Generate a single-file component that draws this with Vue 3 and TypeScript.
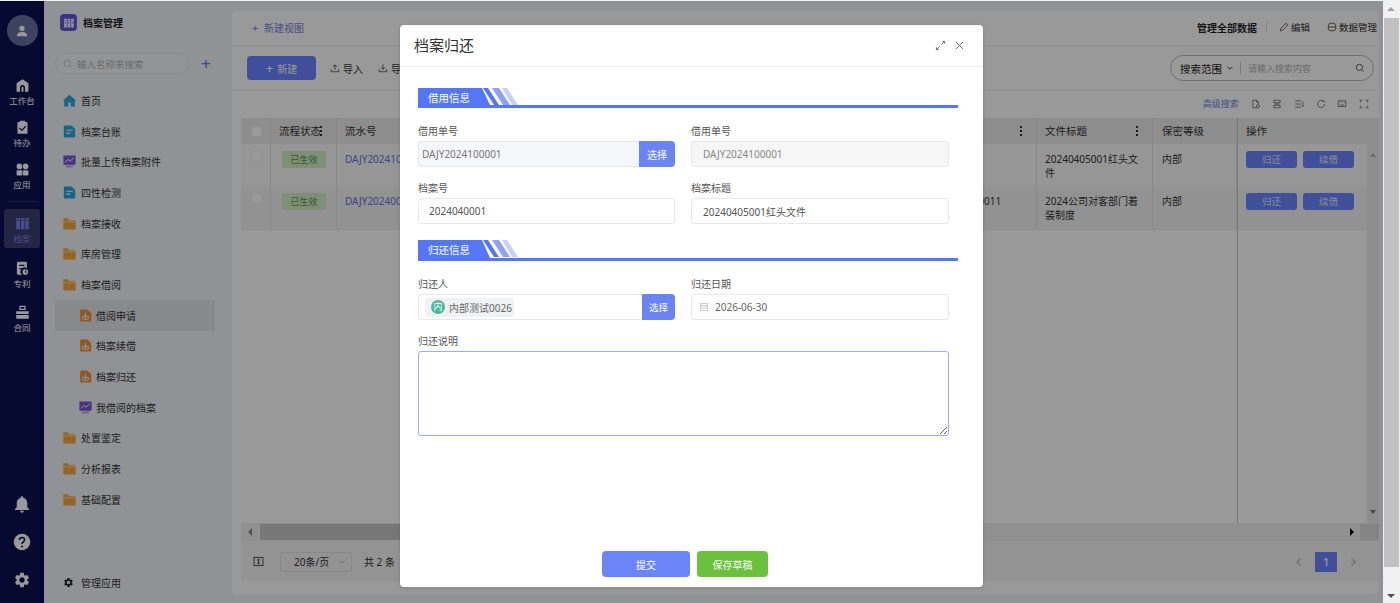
<template>
  <div class="screen">
    <div class="page">
      <aside class="rail">
        <div class="avatar">
          <svg viewBox="0 0 24 24" class="avatar-icon"><circle cx="12" cy="7.5" r="4.5" /><path d="M3 20c0-4 4-6.5 9-6.5s9 2.5 9 6.5v1H3z" /></svg>
        </div>
        <template v-for="item in railItems" :key="item.label">
          <div v-if="item.divider" class="rail-divider"></div>
          <div class="rail-item" :class="{ active: item.active }">
            <svg viewBox="0 0 24 24" class="rail-icon">
              <path :d="item.icon" fill-rule="evenodd" />
            </svg>
            <span>{{ item.label }}</span>
          </div>
        </template>
        <div class="rail-bottom">
          <svg viewBox="0 0 24 24" class="rail-tool bell"><path d="M12 1.5c1 0 1.7.7 1.7 1.6v.7c3.4.8 5.3 3.6 5.3 7.2v5l2.5 3v1h-19v-1l2.5-3v-5c0-3.6 1.9-6.4 5.3-7.2v-.7c0-.9.7-1.6 1.7-1.6zM9.5 21h5a2.5 2.5 0 0 1-5 0z" /></svg>
          <svg viewBox="0 0 24 24" class="rail-tool help"><circle cx="12" cy="12" r="11" /><path class="help-mark" d="M8.6 9.2c0-2 1.5-3.3 3.5-3.3s3.4 1.2 3.4 3c0 2.800-3.500 2.900-3.500 5.800" /><circle class="help-dot" cx="12" cy="18" r="1.300" /></svg>
          <svg viewBox="0 0 24 24" class="rail-tool gear"><path :d="gearPath" /></svg>
        </div>
      </aside>

      <aside class="sidebar">
        <div class="brand">
          <span class="brand-logo">
            <svg viewBox="0 0 16 16"><path fill-rule="evenodd" d="M2.500 3h3v10h-3zM3.300 5v1h1.400V5zM3.300 7.500v1h1.400v-1zM6.500 3h3v10h-3zM7.300 5v1h1.400V5zM7.300 7.500v1h1.400v-1zM10.500 3h3l-.4 10h-2.600zM11.300 5v1h1.300V5zM11.300 7.500v1h1.300v-1z" /></svg>
          </span>
          <strong>档案管理</strong>
        </div>
        <div class="side-search">
          <div class="side-input">
            <svg viewBox="0 0 16 16" class="stroke-icon"><circle cx="7" cy="7" r="5" /><path d="m11 11 3 3" /></svg>
            <span>输入名称来搜索</span>
          </div>
          <span class="side-add">+</span>
        </div>
        <nav class="menu">
          <div
            v-for="item in menuItems"
            :key="item.label"
            class="menu-row"
            :class="{ sub: item.sub, current: item.current }"
          >
            <svg viewBox="0 0 16 16" class="menu-icon">
              <template v-if="item.kind === 'home'">
                <path d="M8 1 .3 7.600 1.500 8.800V15.500h13V8.800l1.200-1.200z" fill="#27a7de" />
                <rect x="6.500" y="10.500" width="3" height="5" fill="#fff" />
              </template>
              <template v-else-if="item.kind === 'doc'">
                <path d="M2.500.5h8L15 5v9a1.500 1.500 0 0 1-1.500 1.500h-11A1.500 1.500 0 0 1 1 14V2A1.500 1.500 0 0 1 2.500.5z" fill="#27a7de" />
                <path d="M4 6.500h8M4 10h5" stroke="#fff" stroke-width="1.400" />
              </template>
              <template v-else-if="item.kind === 'chart'">
                <rect x="0.500" y="0.500" width="15" height="11.500" rx="1" fill="#7a58d8" />
                <path d="m2.500 9 3.500-3.500 2.500 2L13.500 3.500" stroke="#fff" stroke-width="1.200" fill="none" />
                <path d="M2.500 13h11L11.500 15.500h-7z" fill="#b7a3ec" />
              </template>
              <template v-else-if="item.kind === 'folder'">
                <path d="M0.500 1.500h5.500l1.500 2.500H15.500V15.500H.5z" fill="#f3aa3a" />
                <path d="M0.500 5h15v1.500H.5z" fill="#fbd287" />
              </template>
              <template v-else>
                <path d="M3 .5h7l5 4.500v9A1.500 1.500 0 0 1 13.500 15.500h-10.500A1.500 1.500 0 0 1 1.500 14V2A1.500 1.500 0 0 1 3 .5z" fill="#f2913a" />
                <path d="M8 4.500v3M4.500 12.500V9h7v3.500M8 7.500v5M4.500 12.500h7" stroke="#fff" stroke-width="1.100" fill="none" />
              </template>
            </svg>
            <span>{{ item.label }}</span>
          </div>
        </nav>
        <div class="manage">
          <svg viewBox="0 0 24 24" class="manage-icon"><path :d="gearPath" /></svg>
          <span>管理应用</span>
        </div>
      </aside>

      <main class="main">
        <header class="tabbar">
          <span class="new-view"><b>+</b> 新建视图</span>
          <div class="tab-actions">
            <strong>管理全部数据</strong>
            <i class="tab-sep"></i>
            <span class="tab-action">
              <svg viewBox="0 0 16 16" class="stroke-icon"><path d="M2 14l1-4 8-8 3 3-8 8z" /></svg>
              编辑
            </span>
            <span class="tab-action data">
              <svg viewBox="0 0 16 16" class="stroke-icon"><rect x="2" y="2" width="12" height="12" rx="4" /><path d="M2 8h12" /></svg>
              数据管理
            </span>
          </div>
        </header>

        <section class="toolbar">
          <button class="btn-new"><b>+</b>新建</button>
          <span class="tool-link">
            <svg viewBox="0 0 16 16" class="stroke-icon"><path d="M8 11V3M5 6l3-3 3 3M2 10v4h12v-4" /></svg>
            导入
          </span>
          <span class="tool-link">
            <svg viewBox="0 0 16 16" class="stroke-icon"><path d="M8 2v8M5 7l3 3 3-3M2 10v4h12v-4" /></svg>
            导出
          </span>
          <div class="search-pill">
            <span class="scope">搜索范围</span>
            <svg viewBox="0 0 10 10" class="stroke-icon scope-arrow"><path d="m2 3.500 3 3 3-3" /></svg>
            <i class="scope-sep"></i>
            <span class="search-hint">请输入搜索内容</span>
            <svg viewBox="0 0 16 16" class="stroke-icon search-go"><circle cx="7" cy="7" r="5" /><path d="m11 11 3 3" /></svg>
          </div>
        </section>

        <section class="table-tools">
          <span class="advanced">高级搜索</span>
          <svg v-for="icon in tableIcons" :key="icon" viewBox="0 0 16 16" class="stroke-icon table-tool"><path :d="icon" /></svg>
        </section>

        <section class="table">
          <div class="thead grid">
            <div class="cell check-cell"><i class="checkbox"></i></div>
            <div class="cell">流程状态<b class="kebab"></b></div>
            <div class="cell">流水号</div>
            <div class="cell"></div>
            <div class="cell"><b class="kebab"></b></div>
            <div class="cell">文件标题<b class="kebab"></b></div>
            <div class="cell level-cell">保密等级</div>
            <div class="cell action-cell">操作</div>
          </div>
          <div class="tbody">
            <div class="rows">
              <div v-for="row in rows" :key="row.serial" class="row grid" :class="row.cls">
                <div class="cell check-cell"><i class="checkbox"></i></div>
                <div class="cell status-cell"><span class="status">已生效</span></div>
                <div class="cell link">{{ row.serial }}</div>
                <div class="cell"></div>
                <div class="cell">{{ row.code }}</div>
                <div class="cell">{{ row.title }}</div>
                <div class="cell level-cell">内部</div>
                <div class="cell action-cell">
                  <button class="row-btn">归还</button>
                  <button class="row-btn">续借</button>
                </div>
              </div>
              <div class="filler grid"><div class="filler-action"></div></div>
            </div>
            <div class="v-scroll">
              <i class="arrow up"></i>
              <i class="arrow down"></i>
            </div>
          </div>
          <div class="h-scroll">
            <i class="h-arrow left"></i>
            <div class="h-thumb"></div>
            <i class="h-arrow right"></i>
            <div class="h-corner"></div>
          </div>
        </section>

        <footer class="pager">
          <svg viewBox="0 0 16 16" class="stroke-icon pager-icon"><rect x="1.500" y="2" width="13" height="12" /><path d="M8 4.500v7M6 6l2-1.500L10 6M6 10l2 1.500 2-1.500" /></svg>
          <div class="page-size">
            <span>20条/页</span>
            <svg viewBox="0 0 10 10" class="stroke-icon"><path d="m1.500 3.500 3.500 3 3.500-3" /></svg>
          </div>
          <span class="total">共 2 条</span>
          <div class="pages">
            <svg viewBox="0 0 10 10" class="stroke-icon page-arrow"><path d="M6.500 1.500 3 5l3.500 3.500" /></svg>
            <span class="page-no">1</span>
            <svg viewBox="0 0 10 10" class="stroke-icon page-arrow"><path d="M3.500 1.500 7 5 3.500 8.500" /></svg>
          </div>
        </footer>
      </main>

      <div class="mask"></div>

      <div class="dialog">
        <div class="dialog-head">
          <h3>档案归还</h3>
          <svg viewBox="0 0 12 12" class="head-icon"><path d="M7 5l3.500-3.500M8 1.500h2.500V4M5 7l-3.500 3.500M1.500 8v2.500H4" /></svg>
          <svg viewBox="0 0 12 12" class="head-icon close"><path d="m2 2 8 8M10 2l-8 8" /></svg>
        </div>

        <div class="dialog-body">
          <div class="section">
            <span class="section-tag">借用信息</span>
            <svg viewBox="0 0 40 17" class="section-stripes">
              <path d="M0 0h5l11 17h-5z" fill="#5577f7" />
              <path d="M9 0h7l11 17h-7z" fill="#8ea3f8" />
              <path d="M19 0h5l11 17h-6z" fill="#c5d1fb" />
            </svg>
          </div>
          <div class="form-grid">
            <label class="field">
              <span>借用单号</span>
              <div class="input-group">
                <input class="input tight" value="DAJY2024100001" readonly />
                <button class="pick">选择</button>
              </div>
            </label>
            <label class="field">
              <span>借用单号</span>
              <input class="input disabled" value="DAJY2024100001" readonly />
            </label>
            <label class="field">
              <span>档案号</span>
              <input class="input first-col" value="2024040001" readonly />
            </label>
            <label class="field">
              <span>档案标题</span>
              <input class="input" value="20240405001红头文件" readonly />
            </label>
          </div>

          <div class="section second">
            <span class="section-tag">归还信息</span>
            <svg viewBox="0 0 40 17" class="section-stripes">
              <path d="M0 0h5l11 17h-5z" fill="#5577f7" />
              <path d="M9 0h7l11 17h-7z" fill="#8ea3f8" />
              <path d="M19 0h5l11 17h-6z" fill="#c5d1fb" />
            </svg>
          </div>
          <div class="form-grid">
            <div class="field">
              <span>归还人</span>
              <div class="input-group person">
                <div class="chip-box">
                  <span class="chip"><i>内</i>内部测试0026</span>
                </div>
                <button class="pick narrow">选择</button>
              </div>
            </div>
            <div class="field">
              <span>归还日期</span>
              <div class="date-box">
                <svg viewBox="0 0 12 12" class="calendar"><rect x="1.500" y="2" width="9" height="8.500" /><path d="M1.500 4.500h9M4 3.500v3M8 3.500v3M1.500 7.500h9" /></svg>
                <span>2026-06-30</span>
              </div>
            </div>
            <label class="field wide">
              <span>归还说明</span>
              <textarea class="note"></textarea>
            </label>
          </div>
        </div>

        <div class="dialog-foot">
          <button class="submit">提交</button>
          <button class="draft">保存草稿</button>
        </div>
      </div>
    </div>

    <div class="page-scroll">
      <i class="sb-arrow sb-up"></i>
      <div class="sb-thumb"></div>
      <i class="sb-arrow sb-down"></i>
    </div>
  </div>
</template>

<script setup lang="ts">
interface RailItem {
  label: string
  icon: string
  active?: boolean
  divider?: boolean
}

interface MenuItem {
  label: string
  kind: 'home' | 'doc' | 'chart' | 'folder' | 'odoc'
  sub?: boolean
  current?: boolean
}

const gearPath =
  'M19.14 12.94c.04-.3.06-.61.06-.94 0-.32-.02-.64-.07-.94l2.03-1.58a.49.49 0 0 0 .12-.61l-1.92-3.32a.488.488 0 0 0-.59-.22l-2.39.96c-.5-.38-1.03-.7-1.62-.94l-.36-2.54a.484.484 0 0 0-.48-.41h-3.84c-.24 0-.43.17-.47.41l-.36 2.54c-.59.24-1.13.57-1.62.94l-2.39-.96c-.22-.08-.47 0-.59.22L2.74 8.870c-.12.21-.08.47.12.61l2.03 1.58c-.05.3-.09.63-.09.94s.02.64.07.94l-2.03 1.58a.49.49 0 0 0-.12.61l1.92 3.32c.12.22.37.29.59.22l2.39-.96c.5.38 1.03.7 1.62.94l.36 2.54c.05.24.24.41.48.41h3.84c.24 0 .44-.17.47-.41l.36-2.54c.59-.24 1.13-.56 1.62-.94l2.39.96c.22.08.47 0 .59-.22l1.920-3.32c.12-.22.07-.47-.12-.61l-2.010-1.58zM12 15.600c-1.980 0-3.600-1.620-3.600-3.600s1.620-3.600 3.600-3.600 3.600 1.620 3.600 3.600-1.620 3.600-3.600 3.600z'

const railItems: RailItem[] = [
  { label: '工作台', icon: 'M12 2 2.500 8.500V22H8v-7a4 4 0 0 1 8 0v7h5.500V8.500zM10.500 22v-6.500a1.500 1.500 0 0 1 3 0V22z' },
  { label: '待办', icon: 'M8 1h8v2h3a1 1 0 0 1 1 1v17a1 1 0 0 1-1 1H5a1 1 0 0 1-1-1V4a1 1 0 0 1 1-1h3zM16.500 9 11 15l-3-3-1.400 1.400L11 17.800l7-7.400z' },
  { label: '应用', icon: 'M7 2.500a4.500 4.500 0 1 1 0 9 4.500 4.500 0 0 1 0-9zM17 2.500a4.500 4.500 0 1 1 0 9 4.500 4.500 0 0 1 0-9zM4 13h6a1.500 1.500 0 0 1 1.500 1.500V20a1.500 1.500 0 0 1-1.500 1.500H4A1.500 1.500 0 0 1 2.500 20v-5.500A1.500 1.500 0 0 1 4 13zM14 13h6a1.500 1.500 0 0 1 1.500 1.500V20a1.500 1.500 0 0 1-1.500 1.500h-6a1.500 1.500 0 0 1-1.500-1.500v-5.500A1.500 1.500 0 0 1 14 13z' },
  { label: '档案', active: true, divider: true, icon: 'M2 3h6v18H2zM3.500 6v2h3V6zM9.500 3H15v18H9.500zM11 6v2h2.500V6zM16.500 3H22v18h-5.500zM18 6v2h2.500V6z' },
  { label: '专利', icon: 'M5 1h12a2 2 0 0 1 2 2v8.500a6 6 0 0 0-7.500 10.500H5a2 2 0 0 1-2-2V3a2 2 0 0 1 2-2zM7 6v2h8V6zM7 11v2h4v-2zM16.500 13a4.500 4.500 0 1 1 0 9 4.500 4.500 0 0 1 0-9zM16 15v3.500h3V17h-1.500v-2z' },
  { label: '合同', icon: 'M7 1h10v7H7zM9 3v3h6V3zM2 10h20v12H2zM2 14.500v1.500h20v-1.500z' }
]

const menuItems: MenuItem[] = [
  { label: '首页', kind: 'home' },
  { label: '档案台账', kind: 'doc' },
  { label: '批量上传档案附件', kind: 'chart' },
  { label: '四性检测', kind: 'doc' },
  { label: '档案接收', kind: 'folder' },
  { label: '库房管理', kind: 'folder' },
  { label: '档案借阅', kind: 'folder' },
  { label: '借阅申请', kind: 'odoc', sub: true, current: true },
  { label: '档案续借', kind: 'odoc', sub: true },
  { label: '档案归还', kind: 'odoc', sub: true },
  { label: '我借阅的档案', kind: 'chart', sub: true },
  { label: '处置鉴定', kind: 'folder' },
  { label: '分析报表', kind: 'folder' },
  { label: '基础配置', kind: 'folder' }
]

const tableIcons: string[] = [
  'M10 14H3V2h6l3 3v3M9 2v3h3M11 9a2.500 2.500 0 1 1 0 5 2.500 2.500 0 0 1 0-5z',
  'M3 2h10v4H3zM3 10h10v4H3zM6 6v4M10 6v4',
  'M2 3h9M2 8h9M2 13h9M14 4v8M12.800 10.500 14 12l1.200-1.500',
  'M13.500 8A5.500 5.500 0 1 1 11.500 3.800M11.500 1.500v2.500H14',
  'M2 3h12v9H2zM4 5.500h.5M6.500 5.500h.5M9 5.500h.5M11.500 5.500h.5M5 9.500h6',
  'M2 5.500V2h3.500M10.500 2H14v3.500M2 10.500V14h3.500M14 10.500V14h-3.500'
]

const rows = [
  { serial: 'DAJY2024100001', code: '', title: '20240405001红头文件', cls: 'row-a' },
  { serial: 'DAJY2024000011', code: '2024040011', title: '2024公司对客部门着装制度', cls: 'row-b' }
]
</script>

<style>
html,
body {
  margin: 0;
  overflow: hidden;
}
</style>

<style scoped>
* {
  box-sizing: border-box;
}

.screen {
  display: flex;
  width: 1400px;
  height: 603px;
  overflow: hidden;
  font-family: "Noto Sans", "Noto Sans CJK SC", sans-serif;
  font-size: 10px;
  color: #333;
  background: #f1f1f1;
}

.page {
  position: relative;
  display: flex;
  width: 1383px;
  height: 603px;
  padding-top: 1px;
  background: #f0f3f8;
}

.stroke-icon {
  fill: none;
  stroke: currentColor;
  stroke-width: 1.2;
  flex: none;
}

/* left rail */
.rail {
  display: flex;
  flex-direction: column;
  align-items: center;
  flex: none;
  width: 44px;
  background: #0a1150;
}

.avatar {
  display: flex;
  align-items: center;
  justify-content: center;
  flex: none;
  width: 31px;
  height: 31px;
  margin-top: 14px;
  margin-bottom: 31.500px;
  border-radius: 50%;
  background: #646f9e;
}

.avatar-icon {
  width: 14px;
  height: 14px;
  fill: #fff;
}

.rail-item {
  display: flex;
  flex-direction: column;
  align-items: center;
  flex: none;
  width: 36px;
  height: 42px;
  border-radius: 3px;
  font-size: 8.500px;
  line-height: 11px;
  color: #fff;
}

.rail-icon {
  flex: none;
  width: 15px;
  height: 15px;
  margin-bottom: 2px;
  fill: #fff;
}

.rail-item.active {
  height: 39px;
  margin-bottom: 12.500px;
  padding-top: 7px;
  background: #3a3f70;
  color: #7c80e8;
}

.rail-item.active ~ .rail-item {
  height: 44px;
}

.rail-item.active .rail-icon {
  fill: #7c80e8;
}

.rail-divider {
  flex: none;
  width: 30px;
  height: 1px;
  margin: -3px 0 7.500px;
  background: #2a3170;
}

.rail-bottom {
  display: flex;
  flex-direction: column;
  align-items: center;
  gap: 20px;
  margin-top: auto;
  padding-bottom: 14px;
}

.rail-tool {
  width: 18px;
  height: 18px;
  fill: #fff;
}

.help-mark {
  fill: none;
  stroke: #0a1150;
  stroke-width: 2;
}

.help-dot {
  fill: #0a1150;
}

/* menu column */
.sidebar {
  display: flex;
  flex-direction: column;
  flex: none;
  width: 187px;
  padding: 13px 15px 0 11px;
}

.brand {
  display: flex;
  align-items: center;
  gap: 6px;
  height: 17px;
  padding-left: 5px;
  font-size: 10px;
  color: #222;
}

.brand-logo {
  display: flex;
  align-items: center;
  justify-content: center;
  width: 17px;
  height: 17px;
  border-radius: 4px;
  background: #6a55e0;
}

.brand-logo svg {
  width: 14px;
  height: 14px;
  fill: #fff;
}

.side-search {
  display: flex;
  align-items: center;
  gap: 12px;
  margin-top: 22px;
}

.side-input {
  display: flex;
  align-items: center;
  gap: 4px;
  width: 134px;
  height: 21px;
  padding-left: 7px;
  border: 1px solid #e5e7ea;
  border-radius: 11px;
  background: #f6f7f9;
  color: #b3b3b3;
  font-size: 9.500px;
}

.side-input svg {
  width: 10px;
  height: 10px;
}

.side-add {
  font-size: 17px;
  line-height: 20px;
  color: #6176ea;
}

.menu {
  margin-top: 11px;
}

.menu-row {
  display: flex;
  align-items: center;
  gap: 5px;
  width: 160px;
  height: 30.700px;
  padding-left: 8px;
  color: #333;
}

.menu-row.sub {
  padding-left: 24px;
  gap: 4px;
}

.menu-row.current {
  background: #e2e4e8;
}

.menu-icon {
  flex: none;
  width: 13px;
  height: 13px;
}

.manage {
  display: flex;
  align-items: center;
  gap: 7px;
  margin-top: auto;
  height: 20px;
  margin-bottom: 11px;
  padding-left: 8px;
  color: #333;
}

.manage-icon {
  width: 11px;
  height: 11px;
  fill: #222;
}

/* main card */
.main {
  display: flex;
  flex-direction: column;
  flex: 1;
  min-width: 0;
  margin: 9px 3px 8px 0;
  border: 1px solid #f2f3f5;
  border-radius: 5px;
  background: #fff;
}

.tabbar {
  display: flex;
  align-items: center;
  justify-content: space-between;
  flex: none;
  height: 35px;
  padding: 0 2px 2px 20px;
  border-bottom: 1px solid #f1f1f1;
}

.new-view {
  color: #7183e8;
}

.new-view b {
  margin-right: 3px;
  font-weight: 400;
  font-size: 11px;
}

.tab-actions {
  display: flex;
  align-items: center;
}

.tab-actions strong {
  font-weight: 600;
  color: #222;
}

.tab-sep {
  width: 1px;
  height: 10px;
  margin: 0 12px 0 9px;
  background: #ddd;
}

.tab-action {
  display: flex;
  align-items: center;
  gap: 2px;
  font-size: 9.500px;
}

.tab-action svg {
  width: 10px;
  height: 10px;
}

.tab-action.data {
  margin-left: 17px;
}

.toolbar {
  display: flex;
  align-items: center;
  flex: none;
  height: 45px;
  padding: 0 5px 0 15px;
  border-bottom: 1px solid #f1f1f1;
}

.btn-new {
  width: 69px;
  height: 24px;
  margin-right: 14px;
  border: 0;
  border-radius: 4px;
  background: #6a84ff;
  color: #fff;
  font: inherit;
}

.btn-new b {
  margin-right: 4px;
  font-weight: 400;
  font-size: 13px;
}

.tool-link {
  display: flex;
  align-items: center;
  gap: 3px;
  margin-right: 15px;
}

.tool-link svg {
  width: 10px;
  height: 10px;
}

.search-pill {
  display: flex;
  align-items: center;
  width: 204px;
  height: 26px;
  margin-left: auto;
  padding: 0 7px 0 9px;
  border: 1px solid #bbb;
  border-radius: 13px;
}

.scope {
  color: #222;
  font-size: 10.500px;
}

.scope-arrow {
  width: 8px;
  height: 8px;
  margin: 0 6px 0 4px;
}

.scope-sep {
  width: 1px;
  height: 12px;
  margin-right: 7px;
  background: #ccc;
}

.search-hint {
  color: #b3b3b3;
  font-size: 9px;
}

.search-go {
  width: 10px;
  height: 10px;
  margin-left: auto;
  margin-right: 1px;
}

.table-tools {
  display: flex;
  align-items: center;
  flex: none;
  justify-content: flex-end;
  gap: 11.700px;
  height: 27px;
  padding: 0 10px 2px 0;
  color: #555;
}

.advanced {
  color: #6f80e6;
  font-size: 9px;
}

.table-tool {
  width: 10px;
  height: 10px;
}

/* table */
.table {
  display: flex;
  flex-direction: column;
  flex: 1;
  min-height: 0;
  margin-left: 9px;
}

.grid {
  display: grid;
  grid-template-columns: 30px 66px 150px 449px 101px 116px 84px 131px;
}

.thead {
  flex: none;
  height: 26px;
  background: #ebebeb;
  padding-right: 12px;
  font-size: 10.500px;
}

.thead .cell {
  display: flex;
  align-items: center;
  position: relative;
  white-space: nowrap;
}

.cell {
  padding: 0 8px;
  line-height: 14px;
  border-right: 1px solid #e3e3e3;
  min-width: 0;
}

.check-cell {
  padding: 0 0 0 10px;
}

.checkbox {
  display: block;
  width: 11px;
  height: 11px;
  border: 1px solid #efefef;
  border-radius: 2px;
  background: #fff;
}

.kebab {
  position: absolute;
  right: 14px;
  top: 8px;
  width: 2px;
  height: 2px;
  background: #333;
  box-shadow: 0 4px 0 #333, 0 8px 0 #333;
}

.level-cell {
  padding-left: 9px;
}

.tbody {
  display: flex;
  flex: 1;
  min-height: 0;
}

.rows {
  display: flex;
  flex-direction: column;
  flex: 1;
  min-width: 0;
}

.row {
  flex: none;
}

.row .cell {
  padding-top: 8px;
  padding-bottom: 7px;
}

.row .check-cell {
  padding-top: 7px;
}

.row .status-cell {
  padding-top: 7px;
}

.row-a {
  height: 42px;
  background: #fafafa;
}

.row-b {
  height: 44px;
  background: #f3f3f3;
  border-bottom: 1px solid #ececec;
}

.link {
  color: #6c70dd;
  white-space: nowrap;
}

.status {
  display: block;
  width: 44px;
  height: 17px;
  margin-left: 3px;
  text-align: center;
  font-size: 9px;
  line-height: 17px;
  border-radius: 2px;
  background: #d2eec5;
  color: #5a9a40;
}

.action-cell {
  border-left: 1px solid #c4c4c4;
  border-right: 0;
}

.thead .action-cell {
  padding-left: 8px;
}

.row .action-cell {
  display: flex;
  gap: 6px;
  align-items: flex-start;
  padding-top: 7px;
  padding-left: 8px;
}

.row-btn {
  width: 51px;
  height: 17px;
  padding: 0;
  border: 0;
  border-radius: 3px;
  background: #6a84ff;
  color: #dfe4ff;
  font: inherit;
  font-size: 9.500px;
}

.filler {
  flex: 1;
}

.filler-action {
  grid-column: 8;
  border-left: 1px solid #c4c4c4;
}

.v-scroll {
  position: relative;
  flex: none;
  width: 12px;
  background: #ececec;
}

.arrow {
  position: absolute;
  left: 3px;
  width: 0;
  height: 0;
  border-left: 3px solid transparent;
  border-right: 3px solid transparent;
}

.arrow.up {
  top: 9px;
  border-bottom: 4px solid #b5b5b5;
}

.arrow.down {
  bottom: 9px;
  border-top: 4px solid #777;
}

.h-scroll {
  display: flex;
  align-items: center;
  flex: none;
  height: 17px;
  background: #f1f1f1;
}

.h-thumb {
  width: 200px;
  height: 16px;
  margin-left: 8px;
  background: #c6c6c6;
}

.h-arrow {
  width: 0;
  height: 0;
  border-top: 4px solid transparent;
  border-bottom: 4px solid transparent;
}

.h-arrow.left {
  margin-left: 7px;
  border-right: 4px solid #888;
}

.h-arrow.right {
  margin-left: auto;
  margin-right: 6px;
  border-left: 4px solid #000;
}

.h-corner {
  width: 19px;
  height: 16px;
  background: #dcdcdc;
}

.pager {
  display: flex;
  align-items: center;
  flex: none;
  height: 41px;
  margin-left: 9px;
  margin-bottom: 13px;
  padding: 1px 0 0 12px;
  background: #f5f5f5;
  border-top: 1px solid #f1f1f1;
}

.pager-icon {
  width: 11px;
  height: 11px;
  margin-right: 16px;
}

.page-size {
  display: flex;
  align-items: center;
  justify-content: space-between;
  width: 72px;
  height: 20px;
  padding: 0 5px 0 13px;
  border: 1px solid #e2e2e2;
  border-radius: 2px;
}

.page-size svg {
  width: 8px;
  height: 8px;
  color: #bbb;
}

.total {
  margin-left: 12px;
}

.pages {
  display: flex;
  align-items: center;
  gap: 11px;
  margin-left: auto;
  padding-right: 21px;
}

.page-arrow {
  width: 10px;
  height: 10px;
  color: #bbb;
}

.page-no {
  width: 22px;
  height: 20px;
  text-align: center;
  line-height: 20px;
  background: #6a84ff;
  color: #fff;
  font-weight: 600;
}

.mask {
  position: absolute;
  inset: 1px 0 0;
  background: rgba(0, 0, 0, 0.4);
}

/* dialog */
.dialog {
  position: absolute;
  left: 400px;
  top: 25px;
  display: flex;
  flex-direction: column;
  width: 583px;
  height: 562px;
  border-radius: 4px;
  background: #fff;
  box-shadow: 0 1px 4px rgba(0, 0, 0, 0.15);
}

.dialog-head {
  display: flex;
  align-items: center;
  flex: none;
  height: 42px;
  padding: 0 18px 0 14px;
  border-bottom: 1px solid #eeeeee;
}

.dialog-head h3 {
  flex: 1;
  margin: 0 0 2px;
  font-size: 15px;
  font-weight: 400;
  color: #333;
}

.head-icon {
  width: 11px;
  height: 11px;
  margin-left: 8px;
  fill: none;
  stroke: #666;
  stroke-width: 1;
}

.dialog-body {
  flex: 1;
  padding: 21px 25px 0 18px;
}

.section {
  display: flex;
  width: 540px;
  height: 20px;
  border-bottom: 3px solid #5577f7;
}

.section.second {
  height: 21px;
  margin-top: 16px;
  border-bottom-width: 3px;
}

.section-tag {
  width: 72px;
  height: 17px;
  padding-left: 10px;
  font-size: 10.500px;
  line-height: 21px;
  font-weight: 500;
  color: #e6ebff;
  background: #5577f7;
  clip-path: polygon(0 0, 64px 0, 72px 100%, 0 100%);
  overflow: hidden;
}

.section.second .section-tag {
  height: 18px;
}

.section-stripes {
  width: 40px;
  height: 17px;
  margin-left: -7px;
}

.form-grid {
  display: grid;
  grid-template-columns: 257px 258px;
  column-gap: 16px;
  row-gap: 13px;
  margin-top: 15px;
}

.field {
  display: block;
}

.field > span {
  display: block;
  height: 14px;
  margin-bottom: 4px;
  line-height: 16px;
  color: #555;
}

.field.wide {
  grid-column: 1 / 3;
}

.input {
  display: block;
  width: 100%;
  height: 26px;
  padding: 0 11px;
  border: 1px solid #e8e8e8;
  border-radius: 3px;
  outline: none;
  font: inherit;
  color: #555;
  background: #fff;
}

.input.first-col {
  padding-left: 10px;
}

.input.disabled {
  background: #f6f6f6;
  color: #888;
}

.input-group {
  display: flex;
  height: 26px;
}

.input-group .input {
  border-radius: 3px 0 0 3px;
  border-right: 0;
}

.input.tight {
  padding: 0 3px;
  background: #f4f6fa;
  color: #777;
}

.pick {
  flex: none;
  width: 36px;
  height: 26px;
  padding: 0;
  border: 0;
  border-radius: 0 4px 4px 0;
  background: #6a84f6;
  color: #fff;
  font: inherit;
}

.pick.narrow {
  width: 33px;
  font-size: 9.500px;
}

.chip-box {
  display: flex;
  align-items: center;
  flex: 1;
  padding-left: 6px;
  border: 1px solid #e8e8e8;
  border-right: 0;
  border-radius: 3px 0 0 3px;
}

.chip {
  display: flex;
  align-items: center;
  gap: 4px;
  width: 89px;
  height: 19px;
  padding-left: 6px;
  border-radius: 3px;
  background: #f1f2f4;
  color: #666;
}

.chip i {
  display: block;
  width: 14px;
  height: 14px;
  border-radius: 50%;
  background: #49b89b;
  color: #fff;
  font-style: normal;
  font-size: 9px;
  line-height: 14px;
  text-align: center;
}

.date-box {
  display: flex;
  align-items: center;
  gap: 6px;
  height: 26px;
  padding-left: 7px;
  border: 1px solid #e8e8e8;
  border-radius: 3px;
  color: #666;
}

.calendar {
  width: 10px;
  height: 10px;
  fill: none;
  stroke: #bbb;
  stroke-width: 0.8;
}

.note {
  display: block;
  width: 100%;
  height: 85px;
  border: 1px solid #9aaef5;
  border-radius: 3px;
  outline: none;
}

.dialog-foot {
  display: flex;
  flex: none;
  gap: 7px;
  height: 36px;
  padding-left: 202px;
}

.submit,
.draft {
  height: 26px;
  padding: 0;
  border: 0;
  border-radius: 4px;
  color: #fff;
  font: inherit;
}

.submit {
  width: 88px;
  background: #6b84f8;
}

.draft {
  width: 71px;
  background: #69c13c;
}

/* browser scrollbar */
.page-scroll {
  position: relative;
  flex: none;
  width: 17px;
  height: 603px;
  background: #f1f1f1;
}

.sb-thumb {
  position: absolute;
  top: 18px;
  left: 1px;
  width: 15px;
  height: 549px;
  background: #c1c1c1;
}

.sb-arrow {
  position: absolute;
  left: 4px;
  width: 0;
  height: 0;
  border-left: 4px solid transparent;
  border-right: 4px solid transparent;
}

.sb-up {
  top: 7px;
  border-bottom: 4px solid #a3a3a3;
}

.sb-down {
  bottom: 5px;
  border-top: 4px solid #505050;
}
</style>
